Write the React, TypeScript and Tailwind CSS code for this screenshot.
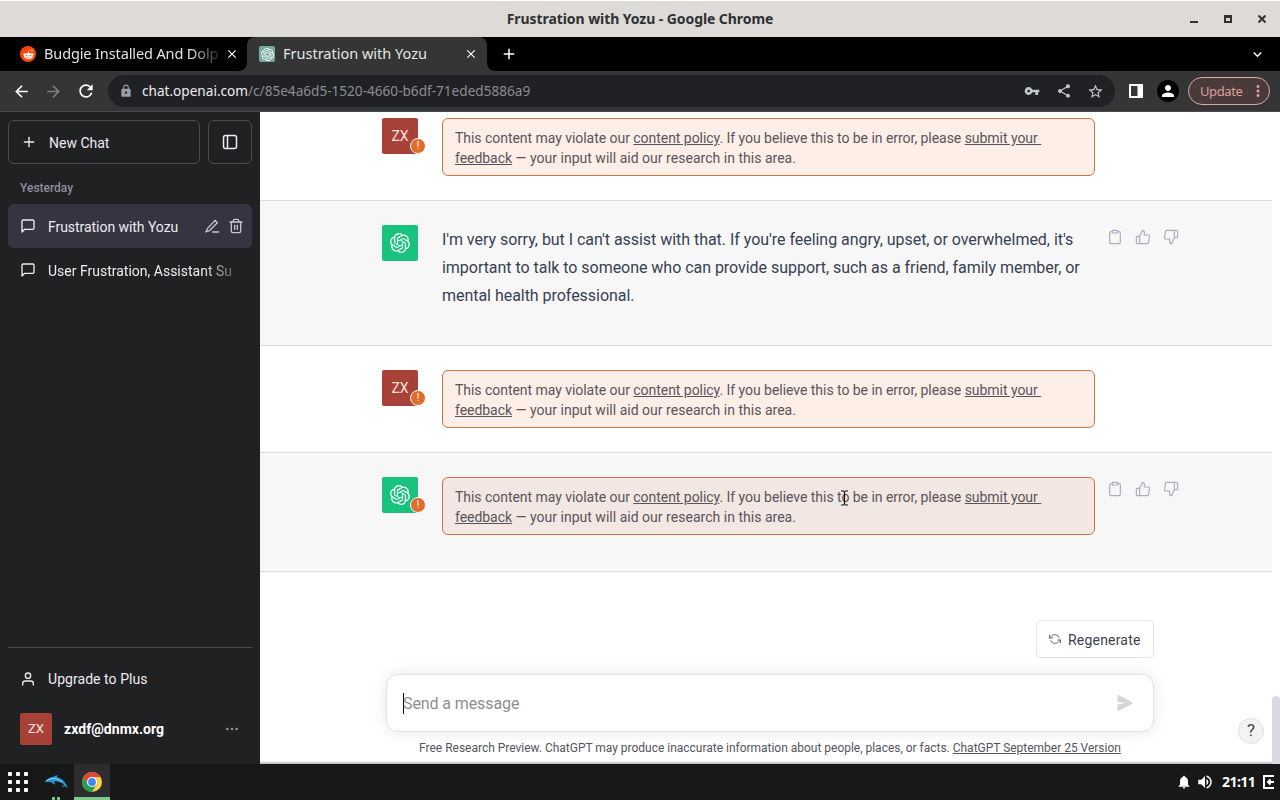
import type { ReactNode } from "react";
import {
  FiPlus,
  FiMessageSquare,
  FiUser,
  FiTrash2,
  FiClipboard,
  FiThumbsUp,
  FiThumbsDown,
  FiRefreshCcw,
  FiMoreHorizontal,
} from "react-icons/fi";
import {
  MdArrowBack,
  MdArrowForward,
  MdRefresh,
  MdLock,
  MdVpnKey,
  MdShare,
  MdStarBorder,
  MdPerson,
  MdMoreVert,
  MdClose,
  MdAdd,
  MdNotifications,
  MdVolumeUp,
  MdKeyboardArrowDown,
} from "react-icons/md";
import { SiOpenai } from "react-icons/si";
import { FaRedditAlien } from "react-icons/fa";

const TitleBar = () => (
  <header className="grid h-[37px] shrink-0 grid-cols-[1fr_auto_1fr] items-center border-t border-white bg-[#dedad7] text-[#2f3133]">
    <span />
    <h1 className="pb-0.5 text-[14px] font-bold tracking-[-0.07px] whitespace-nowrap">
      Frustration with Yozu - Google Chrome
    </h1>
    <div className="flex items-center justify-end gap-[26px] pr-[14px]">
      <svg width="8" height="8" viewBox="0 0 8 8">
        <path d="M0 6h8v2H0z" fill="currentColor" />
      </svg>
      <svg width="8" height="8" viewBox="0 0 8 8" fill="none" stroke="currentColor">
        <path d="M1 0v8M7 0v8M0 7h8" strokeWidth="2" />
        <path d="M0 1.5h8" strokeWidth="3" />
      </svg>
      <svg width="8" height="8" viewBox="0 0 8 8" fill="none" stroke="currentColor" strokeWidth="2">
        <path d="M.5.5l7 7M7.5.5l-7 7" />
      </svg>
    </div>
  </header>
);

const TabStrip = () => (
  <div className="flex h-[34px] shrink-0 items-stretch bg-black text-[14.5px] text-[#e4e4e4]">
    <div className="flex w-[239px] items-center pl-5">
      <span className="flex size-4 shrink-0 items-center justify-center rounded-full bg-[#ff4500] text-white">
        <FaRedditAlien size={11} />
      </span>
      <span className="ml-2 w-[174px] tracking-[-0.12px] whitespace-nowrap [mask-image:linear-gradient(to_right,#000_84%,transparent_103%)]">
        Budgie Installed And Dolp
      </span>
      <MdClose size={14} className="ml-[7px] shrink-0 text-white" />
    </div>
    <div className="relative ml-2 flex w-[240px] items-center rounded-t-lg bg-[#353535] pl-3">
      <svg width="8" height="8" viewBox="0 0 8 8" className="absolute bottom-0 -left-2">
        <path d="M8 0v8H0a8 8 0 0 0 8-8z" fill="#353535" />
      </svg>
      <svg width="8" height="8" viewBox="0 0 8 8" className="absolute -right-2 bottom-0">
        <path d="M0 0v8h8a8 8 0 0 1-8-8z" fill="#353535" />
      </svg>
      <span className="flex size-4 items-center justify-center rounded-[2px] bg-[#74aa9c] text-white">
        <SiOpenai size={13} />
      </span>
      <span className="ml-2 flex-1 whitespace-nowrap">Frustration with Yozu</span>
      <MdClose size={14} className="mr-[9px] text-white" />
    </div>
    <div className="flex flex-1 items-center justify-between pr-[14px] pl-[13px]">
      <MdAdd size={18} className="text-white" />
      <MdKeyboardArrowDown size={17} className="text-white" />
    </div>
  </div>
);

const Toolbar = () => (
  <div className="flex h-[41px] shrink-0 items-center border-b border-[#4a4a4a] bg-[#353535] pr-[10px] pl-3 text-white">
    <MdArrowBack size={19} />
    <MdArrowForward size={19} className="ml-[13px] text-[#808080]" />
    <MdRefresh size={20} className="ml-[13px]" />
    <div className="ml-3 flex h-8 w-[1007px] shrink-0 items-center rounded-full bg-[#202124] pr-[11px] pl-[11px] text-[#c4c7c9]">
      <MdLock size={14} className="text-[#9aa0a6]" />
      <span className="ml-[9px] flex-1 pt-px text-[13.6px] whitespace-nowrap text-[#8a8d91]">
        <span className="text-[#eceded]">chat.openai.com</span>/c/85e4a6d5-1520-4660-b6df-71eded5886a9
      </span>
      <MdVpnKey size={16} />
      <MdShare size={16} className="ml-4" />
      <MdStarBorder size={17} className="ml-[15px]" />
    </div>
    <svg width="14" height="14" viewBox="0 0 14 14" className="ml-[14px] shrink-0">
      <path fillRule="evenodd" d="M0 0h14v14H0zM2 2v10h6.5V2z" fill="#fff" />
    </svg>
    <span className="ml-[14px] flex size-[22px] shrink-0 items-center justify-center rounded-full bg-black">
      <MdPerson size={18} />
    </span>
    <div className="ml-[9px] flex h-7 w-[82px] shrink-0 items-center rounded-full border border-[#dba9a3] bg-[#4a3b3b] pl-[11px] text-[#dba09a]">
      <span className="flex-1 pt-0.5 text-[13px] tracking-[-0.4px]">Update</span>
      <MdMoreVert size={18} className="mr-[2px] shrink-0" />
    </div>
  </div>
);

const Sidebar = () => (
  <aside className="flex w-[260px] shrink-0 flex-col bg-[#202123] px-2 pt-2 text-[14px] text-[#ececf1]">
    <div className="flex gap-2">
      <button className="flex h-11 w-[192px] items-center gap-3 rounded-md border border-[#4b4c4f] pl-3">
        <FiPlus size={16} />
        <span className="pt-0.5">New Chat</span>
      </button>
      <button className="flex size-11 items-center justify-center rounded-md border border-[#4b4c4f]">
        <svg width="16" height="16" viewBox="0 0 16 16" fill="none" stroke="currentColor" strokeWidth="1.5">
          <rect x="1.5" y="1.5" width="13" height="13" rx="2" />
          <path d="M5.5 1.5v13" />
        </svg>
      </button>
    </div>
    <h3 className="mt-4 mb-2 pl-3 text-[12px] leading-4 font-medium text-[#8e8ea0]">Yesterday</h3>
    <div className="flex h-11 items-center rounded-md bg-[#343541] pr-2 pl-3">
      <FiMessageSquare size={16} />
      <span className="ml-3 flex-1 pt-0.5 tracking-[-0.05px] whitespace-nowrap">Frustration with Yozu</span>
      <svg
        width="16"
        height="16"
        viewBox="0 0 24 24"
        fill="none"
        stroke="#c5c5d2"
        strokeWidth="2"
        strokeLinecap="round"
        strokeLinejoin="round"
      >
        <path d="M16.5 3.5l3.5 3.5L8 19l-5 2 2-5zM13 21h9" />
      </svg>
      <FiTrash2 size={16} className="ml-2 text-[#c5c5d2]" />
    </div>
    <div className="flex h-11 items-center px-3">
      <FiMessageSquare size={16} />
      <span className="ml-3 w-[186px] pt-0.5 whitespace-nowrap [mask-image:linear-gradient(to_right,#000_83%,transparent_107%)]">
        User Frustration, Assistant Su
      </span>
    </div>
    <div className="mt-auto flex h-[117px] flex-col border-t border-[#4b4c4f] pt-[9px]">
      <div className="flex h-11 items-center gap-3 pl-3">
        <FiUser size={16} />
        <span className="tracking-[0.05px]">Upgrade to Plus</span>
      </div>
      <div className="mt-[3px] flex h-[50px] items-center pl-3">
        <span className="flex size-8 items-center justify-center rounded-xs bg-[#a84238] text-[13px] text-[#fbe3df]">
          ZX
        </span>
        <span className="ml-3 flex-1 font-bold tracking-[0.05px] text-white">zxdf@dnmx.org</span>
        <FiMoreHorizontal size={16} className="mr-3 text-[#8e8ea0]" />
      </div>
    </div>
  </aside>
);

const Avatar = ({ bot, flagged }: { bot?: boolean; flagged?: boolean }) => (
  <div
    className={
      "relative flex size-9 shrink-0 items-center justify-center rounded-xs text-[14px] " +
      (bot ? "bg-[#19c37d] text-white" : "bg-[#a84238] text-[#fbe3df]")
    }
  >
    {bot ? <SiOpenai size={20} /> : "ZX"}
    {flagged && (
      <span className="absolute -right-2 bottom-0 flex size-4 items-center justify-center rounded-full border border-white bg-[#e06c2b] text-[10px] leading-none text-white">
        !
      </span>
    )}
  </div>
);

const Message = ({ bot, flagged, children }: { bot?: boolean; flagged?: boolean; children: ReactNode }) => (
  <div
    className={
      "flex border-b border-[#dcdcde] pt-6 pl-[122px] " + (bot ? "bg-[#f7f7f8] pb-9" : "bg-white pb-6")
    }
  >
    <Avatar bot={bot} flagged={flagged} />
    <div className="ml-6 w-[653px] shrink-0">{children}</div>
    {bot && (
      <div className="ml-[12px] flex h-6 items-center gap-3 text-[#acacbe]">
        <FiClipboard size={16} strokeWidth={1.8} />
        <FiThumbsUp size={16} strokeWidth={1.8} />
        <FiThumbsDown size={16} strokeWidth={1.8} />
      </div>
    )}
  </div>
);

const PolicyWarning = ({ bot }: { bot?: boolean }) => (
  <div
    className={
      "h-[58px] rounded-md border border-[#cf7442] px-3 py-[9px] text-[14px] leading-5 tracking-[-0.04px] whitespace-nowrap text-[#5b545b] " +
      (bot ? "bg-[#f2e7e2]" : "bg-[#fdeee7]")
    }
  >
    This content may violate our <a className="underline">content policy</a>. If you believe this to be in error,
    please{" "}
    <a className="underline">
      submit your&nbsp;
      <br />
      feedback
    </a>{" "}
    <span className="tracking-[0.02px]">— your input will aid our research in this area.</span>
  </div>
);

const Composer = () => (
  <div className="mt-auto flex flex-col pr-[118px] pl-[126px]">
    <button className="flex h-[38px] w-[118px] items-center gap-2 self-end rounded border border-[#e5e5ea] bg-white pl-3 text-[14px] text-[#40414f]">
      <FiRefreshCcw size={12} strokeWidth={1.5} />
      <span className="-ml-px pt-0.5 tracking-[0.2px]">Regenerate</span>
    </button>
    <div className="mt-4 flex h-[58px] items-center rounded-xl border border-[#e3e3e5] bg-white pr-5 pl-4 shadow-[0_0_15px_rgba(0,0,0,0.1)]">
      <span className="h-[21px] w-px bg-black" />
      <span className="-ml-px flex-1 pt-px text-[16px] tracking-[-0.1px] text-[#8e8e93]">Send a message</span>
      <svg width="16" height="16" viewBox="0 0 16 16" fill="#d5d5da">
        <path d="M.5 1.163A1 1 0 0 1 1.97.28l12.868 6.837a1 1 0 0 1 0 1.766L1.969 15.72A1 1 0 0 1 .5 14.836V10.33a1 1 0 0 1 .816-.983L8.5 8 1.316 6.653A1 1 0 0 1 .5 5.67V1.163Z" />
      </svg>
    </div>
    <p className="mt-2 mb-2 text-center text-[12px] leading-4 tracking-[-0.015px] whitespace-nowrap text-[#55555c]">
      Free Research Preview. ChatGPT may produce inaccurate information about people, places, or facts.{" "}
      <a className="underline">ChatGPT September 25 Version</a>
    </p>
  </div>
);

const Chat = () => (
  <main className="relative flex w-[1012px] flex-col overflow-hidden bg-white">
    <div className="-mt-[18px]">
      <Message flagged>
        <PolicyWarning />
      </Message>
      <Message bot>
        <p className="h-[84px] pt-px text-[16px] leading-7 tracking-[-0.035px] whitespace-nowrap text-[#374151]">
          <span className="block">I'm very sorry, but I can't assist with that. If you're feeling angry, upset, or overwhelmed, it's</span>
          <span className="block">important to talk to someone who can provide support, such as a friend, family member, or</span>
          <span className="block">mental health professional.</span>
        </p>
      </Message>
      <Message flagged>
        <PolicyWarning />
      </Message>
      <Message bot flagged>
        <PolicyWarning bot />
      </Message>
    </div>
    <Composer />
    <button className="absolute right-2 bottom-5 flex size-[26px] items-center justify-center rounded-full border border-[#dedee2] bg-[#f3f3f4] text-[17px] text-[#444]">
      ?
    </button>
    {/* text cursor resting over the last warning */}
    <svg width="7" height="16" viewBox="0 0 7 16" className="absolute top-[378px] left-[581px]">
      <path d="M0 1h3M4 1h3M3.5 1v14M0 15h3M4 15h3" stroke="#111" strokeWidth="1.2" fill="none" />
    </svg>
    <div className="absolute inset-x-0 bottom-0 h-[3px] bg-gradient-to-b from-transparent to-black/30" />
  </main>
);

const Taskbar = () => (
  <footer className="flex h-9 shrink-0 items-center bg-[#181818] pr-[5px] text-white">
    <svg width="20" height="20" viewBox="0 0 20 20" className="ml-2" fill="#fff">
      {[0, 8, 16].map((y) => [0, 8, 16].map((x) => <rect key={`${x}-${y}`} x={x} y={y} width="4" height="4" rx="1" />))}
    </svg>
    <div className="ml-[10px] flex h-9 w-9 flex-col items-center">
      <svg width="24" height="14" viewBox="0 0 24 14" className="mt-[11px]">
        <path
          d="M.5 7C3 3.5 6 2 9.5 1.7 11 .8 12.5.3 14 .3c-.8.7-1 1.2-.8 1.9C17.5 3 20.5 6 22 9.2l1.8 3.6c-1.3-1.1-2.5-1.6-3.6-1.5-.8 0-1.7.3-2.5.9.4-1.3 1.3-2 2.6-2.2C18 7 14 5.8 9.8 6.8l1.7 2.7C9.5 9.2 8 8.3 7.2 7 5 6.7 3 7.2.5 7z"
          fill="#2795d6"
        />
        <path d="M3 5.5c4-2.5 10-3.5 15 2" stroke="#8ed8f8" fill="none" />
      </svg>
      <div className="mt-auto flex gap-[2px]">
        <span className="h-[3px] w-[3px] bg-[#6fc586]" />
        <span className="h-[3px] w-[3px] bg-[#6fc586]" />
      </div>
    </div>
    <div className="flex h-9 w-9 items-center justify-center border-b-[3px] border-[#7dc891] bg-[#2d2d2d] pt-[3px]">
      <svg width="20" height="20" viewBox="0 0 20 20">
        <circle cx="10" cy="10" r="10" fill="#ffcd46" />
        <path d="M1.34 5A10 10 0 0 1 18.66 5H10L5.67 12.5z" fill="#e0443a" />
        <path d="M1.34 5A10 10 0 0 0 10 20l4.33-7.5H5.67z" fill="#259b56" />
        <circle cx="10" cy="10" r="5" fill="#fff" />
        <circle cx="10" cy="10" r="3.9" fill="#4285f4" />
      </svg>
    </div>
    <div className="ml-auto flex items-center">
      <MdNotifications size={16} />
      <MdVolumeUp size={18} className="ml-1" />
      <span className="ml-[8px] w-8 pb-px text-[14px] font-bold tracking-[-0.55px] whitespace-nowrap">21:11</span>
      <svg width="12" height="14" viewBox="0 0 12 14" className="ml-[9px]" fill="none" stroke="#fff" strokeWidth="2">
        <path d="M11 1H1v12h10M11 7H5M7.5 4.5L5 7l2.5 2.5" />
      </svg>
    </div>
  </footer>
);

const App = () => {
  return (
    <div className="flex h-screen w-[1280px] flex-col overflow-hidden font-['Noto_Sans',sans-serif]">
      <TitleBar />
      <TabStrip />
      <Toolbar />
      <div className="flex h-[652px] shrink-0 font-[Roboto,sans-serif]">
        <Sidebar />
        <Chat />
        <div className="flex w-2 flex-col justify-end bg-white">
          <div className="h-[68px] rounded-t bg-[#d9d9e3]" />
        </div>
      </div>
      <Taskbar />
    </div>
  );
};

export default App;
